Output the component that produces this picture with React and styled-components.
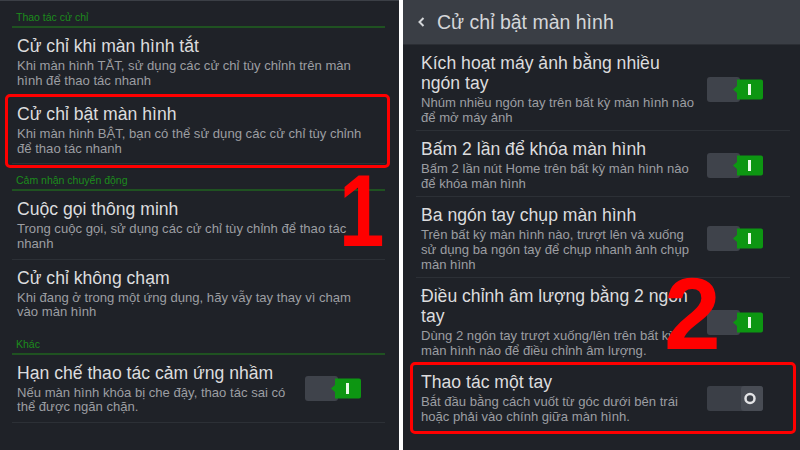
import React from "react";
import styled, { createGlobalStyle } from "styled-components";

const GlobalStyle = createGlobalStyle`
  html, body {
    margin: 0;
    padding: 0;
    background: #ffffff;
  }
  body {
    font-family: "Liberation Sans", Arial, sans-serif;
  }
`;

const Screen = styled.div`
  display: flex;
  justify-content: space-between;
  width: 800px;
  height: 450px;
  background: #ffffff;
  overflow: hidden;
`;

const Panel = styled.div`
  position: relative;
  width: ${(p) => p.width}px;
  height: 450px;
  background: #1f2228;
  overflow: hidden;
  border-top: ${(p) => (p.topStrip ? "1px solid #3b3f46" : "none")};
  box-sizing: border-box;
`;

const Header = styled.div`
  display: flex;
  align-items: center;
  gap: 11px;
  height: 45px;
  padding-left: 14px;
  background: #3a3e45;
  border-bottom: 1px solid #2b2e34;
  box-sizing: border-box;
  color: #d4d6d9;
  font-size: 19.5px;
`;

const List = styled.div`
  display: flex;
  flex-direction: column;
  padding: 0 ${(p) => p.right}px 0 ${(p) => p.left}px;
`;

const Section = styled.div`
  padding: 10px 4px 3px;
  font-size: 10.5px;
  line-height: 12px;
  color: #1c8c1c;
  border-bottom: 2px solid #1f5221;
`;

const Item = styled.div`
  position: relative;
  display: flex;
  align-items: center;
  padding: 8px ${(p) => p.padRight}px ${(p) => p.padBottom}px 5px;
  border-bottom: 1px solid ${(p) => (p.last ? "transparent" : "#2c3036")};

  ${(p) =>
    p.highlight &&
    `
    &::after {
      content: "";
      position: absolute;
      top: ${p.highlight.top}px;
      bottom: ${p.highlight.bottom}px;
      left: ${p.highlight.left}px;
      right: ${p.highlight.right}px;
      border: 3px solid #ff0000;
      border-radius: 5px;
      pointer-events: none;
    }
  `}
`;

const Texts = styled.div`
  flex: 1;
  min-width: 0;
`;

const Title = styled.div`
  font-size: 17.6px;
  line-height: 20px;
  color: #dcdcde;
  white-space: nowrap;
`;

const Sub = styled.div`
  margin-top: 3px;
  font-size: 13.1px;
  line-height: 14.6px;
  color: #9c9ea2;
  white-space: nowrap;
`;

const Line = styled.span`
  display: block;
`;

const BigNumber = styled.div`
  position: absolute;
  left: ${(p) => p.x}px;
  top: ${(p) => p.y}px;
  font-family: "Liberation Sans", Arial, sans-serif;
  font-weight: bold;
  font-size: 102px;
  line-height: 1;
  color: #ff0000;
  transform-origin: left top;
  transform: scaleX(${(p) => p.sx || 1});
  pointer-events: none;
`;

const Toggle = ({ on }) =>
  on ? (
    <svg width="56" height="25" viewBox="0 0 56 25">
      <rect x="0" y="0" width="33" height="25" rx="3" fill="#3f434b" />
      <path d="M30 2.5 H54 a2 2 0 0 1 2 2 V20.5 a2 2 0 0 1 -2 2 H30 V16 L26 12.5 L30 9 Z" fill="#0d9612" />
      <rect x="41" y="7" width="3" height="11" fill="#eafbe8" />
    </svg>
  ) : (
    <svg width="56" height="25" viewBox="0 0 56 25">
      <rect x="0" y="0" width="56" height="25" rx="3" fill="#3b3f47" />
      <rect x="34" y="0" width="22" height="25" rx="3" fill="#484c54" />
      <circle cx="43" cy="12.5" r="4.5" fill="#3b3f47" stroke="#e2e3e5" strokeWidth="2.5" />
    </svg>
  );

const Chevron = () => (
  <svg width="9" height="12" viewBox="0 0 9 12">
    <path d="M6.5 2 L2.5 6 L6.5 10" fill="none" stroke="#d4d6d9" strokeWidth="2" />
  </svg>
);

const Setting = ({ title, sub, toggle, last, highlight, padRight = 24, padBottom = 7 }) => (
  <Item last={last} highlight={highlight} padRight={padRight} padBottom={padBottom}>
    <Texts>
      <Title>
        {title.map((t) => (
          <Line key={t}>{t}</Line>
        ))}
      </Title>
      <Sub>
        {sub.map((t) => (
          <Line key={t}>{t}</Line>
        ))}
      </Sub>
    </Texts>
    {toggle !== undefined && <Toggle on={toggle} />}
  </Item>
);

const right = { padRight: 27, padBottom: 5, toggle: true };

export default function App() {
  return (
    <>
      <GlobalStyle />
      <Screen>
        <Panel width={399} topStrip>
          <List left={12} right={14}>
            <Section>Thao tác cử chỉ</Section>
            <Setting
              title={["Cử chỉ khi màn hình tắt"]}
              sub={["Khi màn hình TẮT, sử dụng các cử chỉ tùy chỉnh trên màn", "hình để thao tác nhanh"]}
            />
            <Setting
              title={["Cử chỉ bật màn hình"]}
              sub={["Khi màn hình BẬT, bạn có thể sử dụng các cử chỉ tùy chỉnh", "để thao tác nhanh"]}
              highlight={{ top: -2, bottom: -5, left: -7, right: -5 }}
            />
            <Section>Cảm nhận chuyển động</Section>
            <Setting
              title={["Cuộc gọi thông minh"]}
              sub={["Trong cuộc gọi, sử dụng các cử chỉ tùy chỉnh để thao tác", "nhanh"]}
            />
            <Setting
              title={["Cử chỉ không chạm"]}
              sub={["Khi đang ở trong một ứng dụng, hãy vẫy tay thay vì chạm", "vào màn hình"]}
              last
            />
            <Section>Khác</Section>
            <Setting
              title={["Hạn chế thao tác cảm ứng nhầm"]}
              sub={["Nếu màn hình khóa bị che đậy, thao tác sai có", "thể được ngăn chặn."]}
              toggle={true}
            />
          </List>
          <BigNumber x={339} y={159} sx={0.8}>1</BigNumber>
        </Panel>

        <Panel width={397}>
          <Header>
            <Chevron />
            <span>Cử chỉ bật màn hình</span>
          </Header>
          <List left={13} right={10}>
            <Setting
              {...right}
              title={["Kích hoạt máy ảnh bằng nhiều", "ngón tay"]}
              sub={["Nhúm nhiều ngón tay trên bất kỳ màn hình nào", "để mở máy ảnh"]}
            />
            <Setting
              {...right}
              title={["Bấm 2 lần để khóa màn hình"]}
              sub={["Bấm 2 lần nút Home trên bất kỳ màn hình nào", "để khóa màn hình"]}
            />
            <Setting
              {...right}
              title={["Ba ngón tay chụp màn hình"]}
              sub={[
                "Trên bất kỳ màn hình nào, trượt lên và xuống",
                "sử dụng ba ngón tay để chụp nhanh ảnh chụp",
                "màn hình",
              ]}
            />
            <Setting
              {...right}
              title={["Điều chỉnh âm lượng bằng 2 ngón", "tay"]}
              sub={["Dùng 2 ngón tay trượt xuống/lên trên bất kỳ", "màn hình nào để điều chỉnh âm lượng."]}
            />
            <Setting
              {...right}
              title={["Thao tác một tay"]}
              sub={["Bắt đầu bằng cách vuốt từ góc dưới bên trái", "hoặc phải vào chính giữa màn hình."]}
              toggle={false}
              last
              highlight={{ top: -2, bottom: -4, left: -6, right: -6 }}
            />
          </List>
          <BigNumber x={261} y={263}>2</BigNumber>
        </Panel>
      </Screen>
    </>
  );
}
